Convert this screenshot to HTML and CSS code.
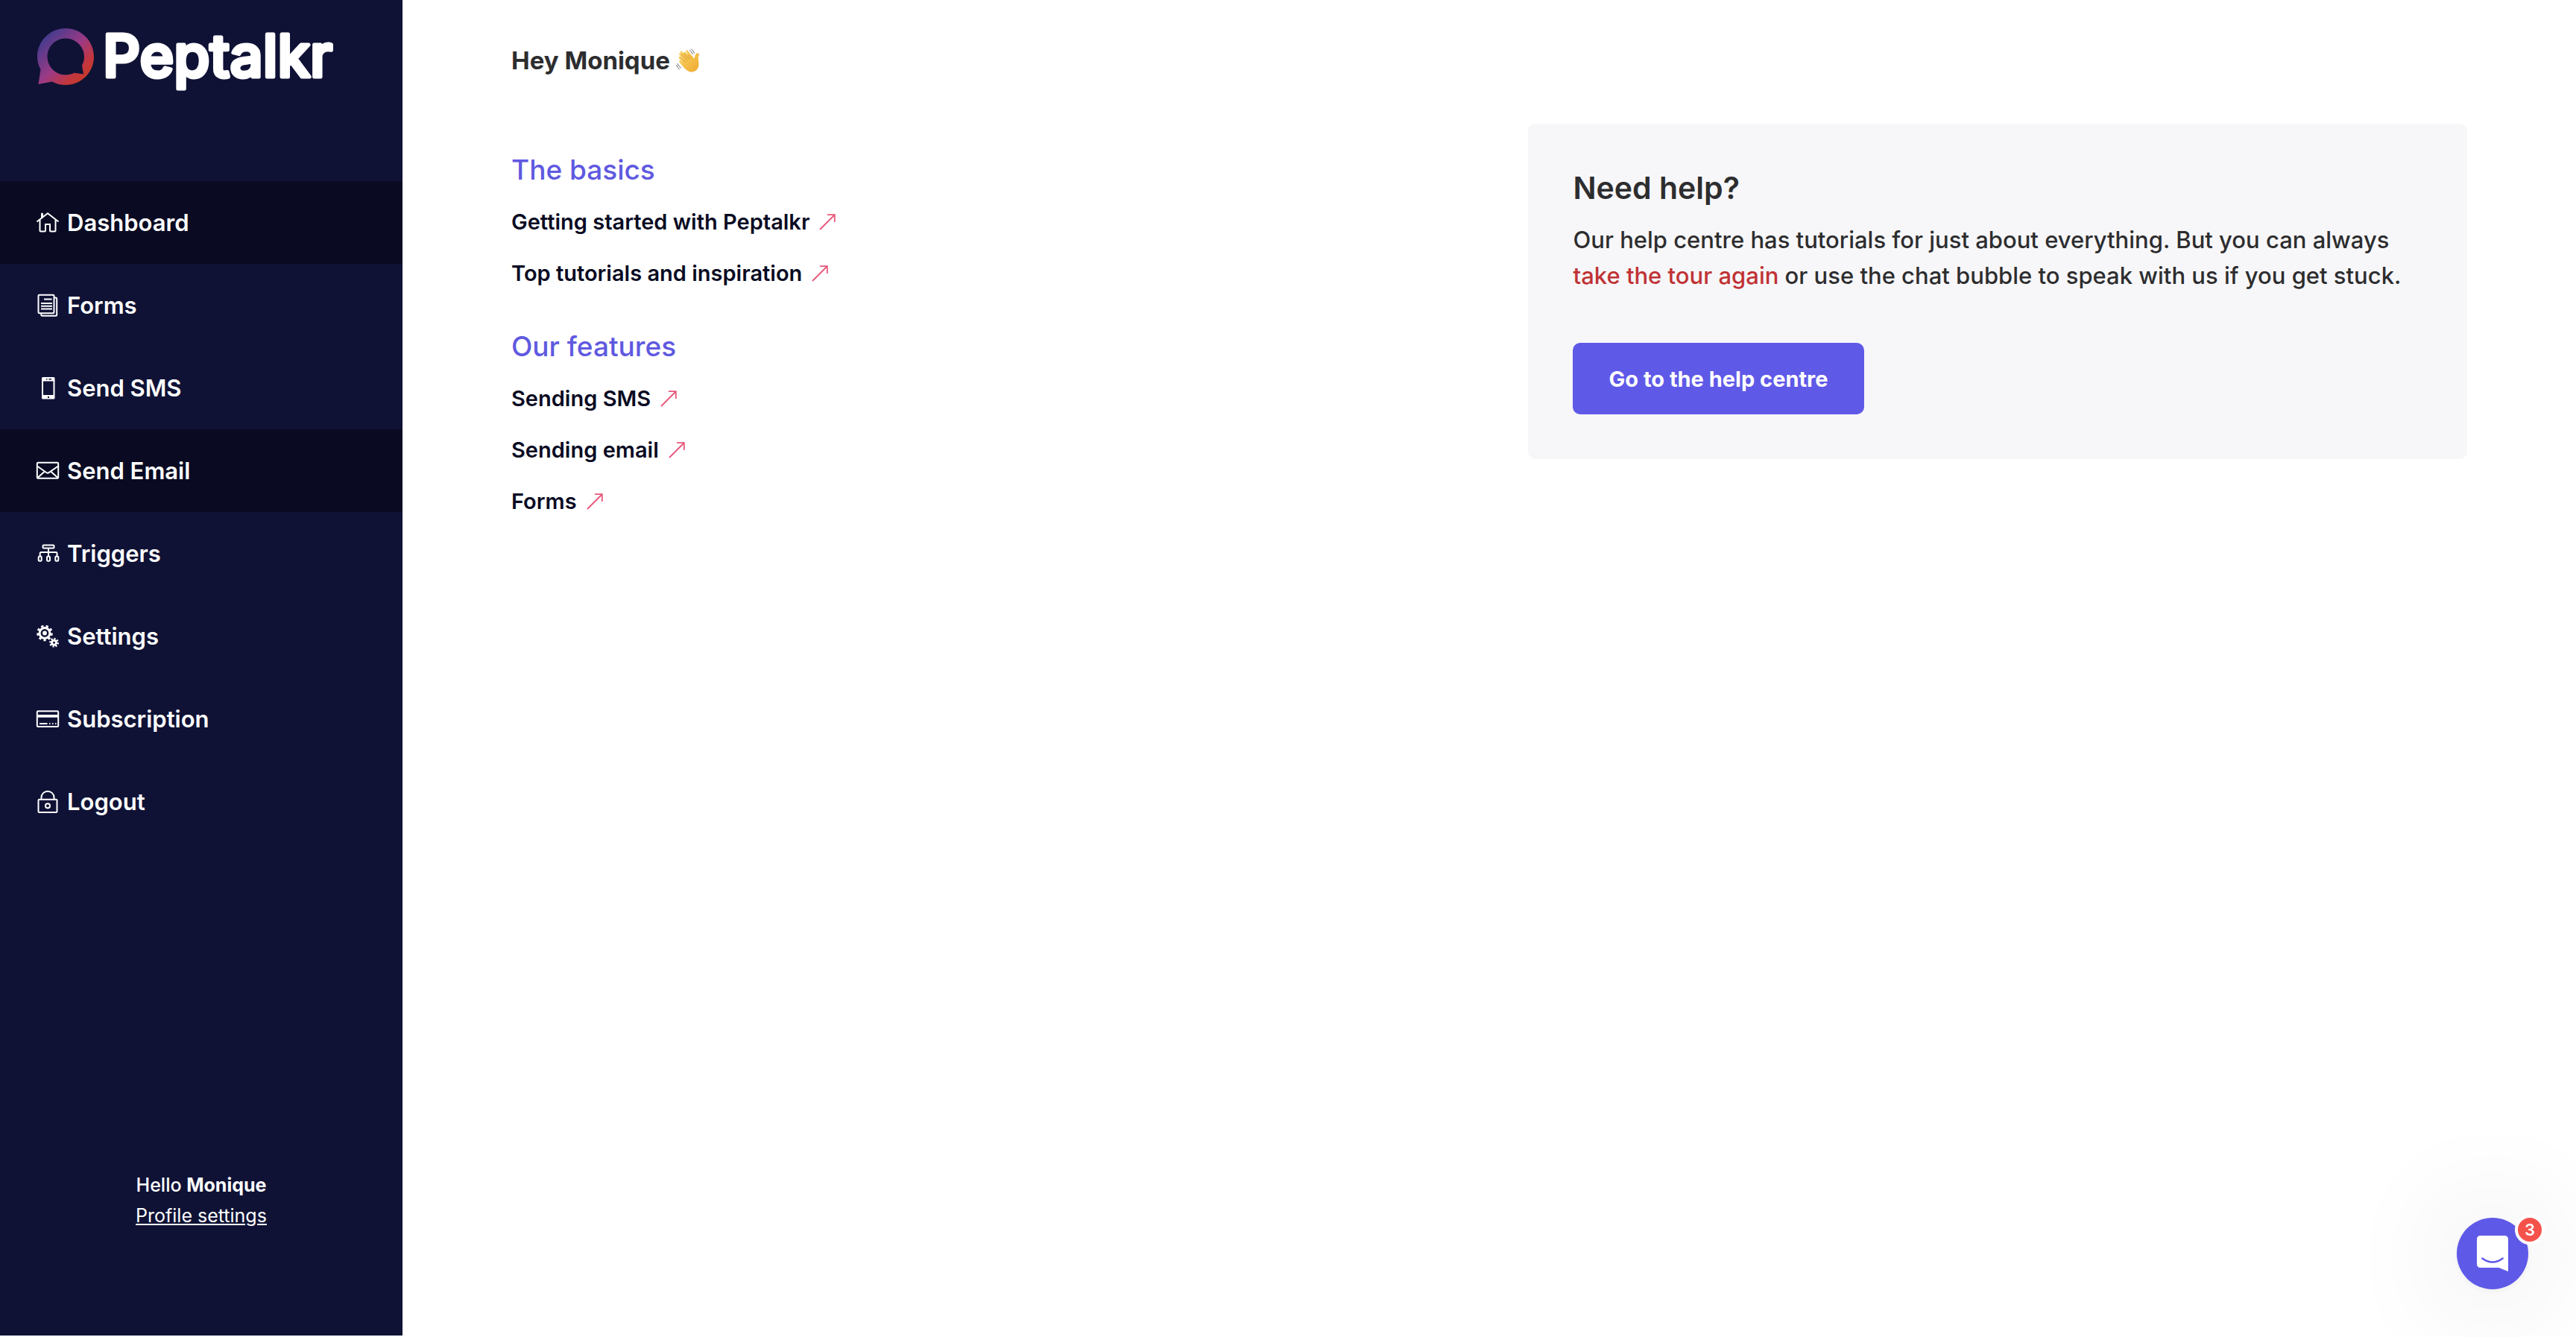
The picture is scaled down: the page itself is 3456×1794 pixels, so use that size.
FILE: index.html
```html
<!DOCTYPE html>
<html lang="en">
<head>
    <meta charset="UTF-8">
    <meta name="viewport" content="width=device-width, initial-scale=1.0">
    <title>Peptalkr - Dashboard</title>
    <link rel="stylesheet" href="styles.css">
</head>
<body>
    <svg width="0" height="0" class="sprite" aria-hidden="true">
        <symbol id="arrow" viewBox="0 0 22 22">
            <path d="M1 21L20.500 1.500M11 1.200H20.800V11" fill="none" stroke="#e8567a" stroke-width="1.800"/>
        </symbol>
    </svg>

    <aside class="sidebar">
        <a href="#" class="logo" aria-label="Peptalkr">
            <svg class="logo-mark" viewBox="0 0 76 76">
                <defs>
                    <linearGradient id="mark" x1="0.15" y1="0.15" x2="0.85" y2="0.85">
                        <stop offset="0" stop-color="#473b8d"/>
                        <stop offset="0.5" stop-color="#9a3a86"/>
                        <stop offset="0.85" stop-color="#c4363c"/>
                        <stop offset="1" stop-color="#c63a2c"/>
                    </linearGradient>
                </defs>
                <path fill="url(#mark)" fill-rule="evenodd" d="M38 0C59 0 76 17 76 38S59 76 38 76C31.500 76 25.500 74.500 20 71.500L1.500 75L4.500 55C1.500 50 0 44 0 38C0 17 17 0 38 0ZM38 13.500C24.500 13.500 13.500 24.500 13.500 38S24.500 62.500 38 62.500C42 62.500 46 61.500 49.500 59.700L62 61.500L60 49.500C62 46 63 42 63 38C63 24.500 51.500 13.500 38 13.500Z"/>
            </svg>
            <svg class="logo-text" viewBox="0 0 320 92">
                <text x="0" y="65">Peptalkr</text>
            </svg>
        </a>

        <nav class="menu">
            <a href="#" class="menu-item active">
                <svg class="icon" viewBox="0 0 30 30"><path d="M.5 13.500L15 2.300L29.500 13.500M4.500 11V25.500q0 1 1 1H11q1 0 1-1V17H18V25.500q0 1 1 1H24.500q1 0 1-1V11"/><path class="solid" d="M6 9V3q0-1.500 1.500-1.500T9 3V6.500Z"/></svg>
                Dashboard
            </a>
            <a href="#" class="menu-item">
                <svg class="icon" viewBox="0 0 30 30"><rect x="2.500" y=".7" width="21" height="24.500" rx="1.200"/><path d="M23.500 4.500H26q1.200 0 1.200 1.200V27.500q0 1.200-1.200 1.200H7.500q-1.200 0-1.200-1.200V25.500M10 6.500H20.500M6 12H21M6 15.800H21M6 19.500H21"/></svg>
                Forms
            </a>
            <a href="#" class="menu-item">
                <svg class="icon" viewBox="0 0 30 30"><path class="solid" fill-rule="evenodd" d="M8.500 0H23q1.500 0 1.500 1.500V28q0 1.500-1.500 1.500H8.500Q7 29.500 7 28V1.500Q7 0 8.500 0ZM9 5.500V24H22.500V5.500ZM13 2V3.500H14.500V2ZM16.500 2V3.500H20V2ZM15 26V28H17V26Z"/></svg>
                Send SMS
            </a>
            <a href="#" class="menu-item active">
                <svg class="icon" viewBox="0 0 30 30"><rect x=".8" y="3.800" width="28.400" height="21" rx="1.200"/><path d="M1 8.500L13.500 17.200q1.500 1 3 0L29 8.500M1.500 24L11 15.500M28.500 24L19 15.500"/></svg>
                Send Email
            </a>
            <a href="#" class="menu-item">
                <svg class="icon" viewBox="0 0 30 30"><rect x="8.500" y="3.500" width="15" height="4" rx="1"/><path d="M16 7.500V18.500M4.700 18.500V14.500q0-1.500 1.500-1.500H26q1.500 0 1.500 1.500V18.500"/><rect x="2.700" y="18.500" width="4" height="6.200" rx="1.500"/><rect x="14" y="18.500" width="4" height="6.200" rx="1.500"/><rect x="25.300" y="18.500" width="4" height="6.200" rx="1.500"/></svg>
                Triggers
            </a>
            <a href="#" class="menu-item">
                <svg class="icon" viewBox="0 0 30 30">
                    <circle class="gear" cx="11" cy="10.500" r="6.900"/>
                    <circle class="gear" cx="11" cy="10.500" r="9.300" pathLength="18" stroke-dasharray="1 1"/>
                    <circle class="solid" cx="11" cy="10.500" r="2.900"/>
                    <circle class="gear" cx="23.500" cy="23.300" r="3"/>
                    <circle class="gear" cx="23.500" cy="23.300" r="5" pathLength="16" stroke-dasharray="1 1"/>
                </svg>
                Settings
            </a>
            <a href="#" class="menu-item">
                <svg class="icon" viewBox="0 0 30 30"><rect x=".8" y="4.200" width="28.400" height="20.800" rx="1.200"/><path class="solid" d="M1 9H29V12.700H1Z"/><path d="M4 21H14.500M17 21H18.500M21 21H22.500M25 21H26.500"/></svg>
                Subscription
            </a>
            <a href="#" class="menu-item">
                <svg class="icon" viewBox="0 0 30 30"><rect x="2.500" y="11.800" width="25" height="17.200" rx="1.200"/><path d="M6.500 11.500V9a8.500 8.300 0 0 1 17 0V11.500"/><circle cx="15" cy="20.300" r="3"/></svg>
                Logout
            </a>
        </nav>

        <div class="profile">
            <div class="hello">Hello <strong>Monique</strong></div>
            <a href="#">Profile settings</a>
        </div>
    </aside>

    <main class="content">
        <h1>Hey Monique
            <svg class="wave" viewBox="0 0 32 32" role="img" aria-label="waving hand">
                <defs>
                    <linearGradient id="skin" x1="0" y1="0" x2="1" y2="1">
                        <stop offset="0" stop-color="#fbd569"/>
                        <stop offset="1" stop-color="#eea92f"/>
                    </linearGradient>
                </defs>
                <path fill="url(#skin)" d="M12 17L4.200 8.500C3.200 7.200 5 5.600 6.300 6.800L7.200 7.700L5.800 5.800C4.800 4.300 6.800 2.800 8 4L10.500 6.800C9.700 5.300 11.600 3.900 12.800 5.200L16 8.700C15.300 7 13.500 5 13.200 3.800C13 2 15.200 1.800 16 3.200L24.500 13.500C25.300 11.500 25.200 9.300 26.800 7.300C28.300 5.500 31 6.500 31 8.200C31 9.500 29.800 10.700 29.800 12.500C29.800 16.500 31.200 20.500 30 24.500C28.500 30 22.500 33 17.500 31C12.500 29 8 22.500 4.500 18.500C3.300 17 5 15.300 6.500 16.500L10 19.500L3.800 13.200C2.600 11.800 4.400 10.200 5.800 11.400Z"/>
                <path fill="none" stroke="#d08a20" stroke-width=".9" stroke-linecap="round" d="M7.200 7.700L15 16M10.500 6.800L17.300 14.200M16 8.700L20 13M5.800 11.400L12.500 18"/>
                <path fill="none" stroke="#555" stroke-width=".9" stroke-linecap="round" d="M18.500 2.500Q21 4.500 22.300 7.500M20.500.8Q23.300 3 24.500 6.300M2 20.500Q3 24 6.500 26M.5 22.500Q1.500 26 4.500 27.800"/>
            </svg>
        </h1>

        <div class="columns">
            <div class="links">
                <section>
                    <h2>The basics</h2>
                    <ul>
                        <li><a href="#">Getting started with Peptalkr <svg class="arrow"><use href="#arrow"/></svg></a></li>
                        <li><a href="#">Top tutorials and inspiration <svg class="arrow"><use href="#arrow"/></svg></a></li>
                    </ul>
                </section>
                <section>
                    <h2>Our features</h2>
                    <ul>
                        <li><a href="#">Sending SMS <svg class="arrow"><use href="#arrow"/></svg></a></li>
                        <li><a href="#">Sending email <svg class="arrow"><use href="#arrow"/></svg></a></li>
                        <li><a href="#">Forms <svg class="arrow"><use href="#arrow"/></svg></a></li>
                    </ul>
                </section>
            </div>

            <section class="help">
                <h3>Need help?</h3>
                <p>Our help centre has tutorials for just about everything. But you can always <a href="#">take the tour again</a> or use the chat bubble to speak with us if you get stuck.</p>
                <button type="button">Go to the help centre</button>
            </section>
        </div>
    </main>

    <button type="button" class="chat" aria-label="Open chat, 3 unread">
        <svg class="chat-icon" viewBox="0 0 42 48">
            <path fill="#fff" d="M5 0H37Q42 0 42 5V48L29.500 43H5Q0 43 0 38V5Q0 0 5 0Z"/>
            <path fill="none" stroke="#5f59e8" stroke-width="2.400" stroke-linecap="round" d="M7.300 30.500Q21 40.500 34.700 30.500"/>
        </svg>
        <span class="badge">3</span>
    </button>
</body>
</html>
```
FILE: styles.css
```css
* { box-sizing: border-box; }
body { margin: 0; display: flex; align-items: flex-start; min-height: 100vh; background: #fff; color: #2d2d2f; font-family: Inter, sans-serif; font-size: 29px; }
a { color: inherit; text-decoration: none; }
h1, h2, h3, p, ul { margin: 0; padding: 0; }
ul { list-style: none; }
button { border: none; font-family: inherit; cursor: pointer; }
.sprite { position: absolute; }

/* sidebar */
.sidebar { display: flex; flex-direction: column; flex: none; width: 540px; min-height: calc(100vh - 2px); background: #0f1235; color: #fff; }
.logo { display: flex; align-items: flex-start; height: 243px; padding: 38px 50px; }
.logo-mark { flex: none; width: 76px; height: 76px; margin-right: 12px; }
.logo-text { flex: none; width: 320px; height: 92px; overflow: visible; }
.logo-text text { font-size: 78px; font-weight: 500; fill: #fff; stroke: #fff; stroke-width: 5px; stroke-linejoin: round; }
.menu-item { display: flex; align-items: center; gap: 11px; height: 111px; padding: 0 49px; font-size: 31px; font-weight: 600; }
.menu-item.active { background: #0a0b23; }
.icon { flex: none; width: 30px; height: 30px; fill: none; stroke: #fff; stroke-width: 2px; overflow: visible; }
.icon .solid { fill: #fff; stroke: none; }
.icon .gear { stroke-width: 3px; }
.profile { margin-top: auto; padding-bottom: 140px; text-align: center; font-size: 25px; line-height: 41px; }
.profile .hello { font-weight: 500; }
.profile strong { font-weight: 700; }
.profile a { text-decoration: underline; }

/* main area */
.content { flex: 1; padding: 56px 146px 0; }
h1 { display: flex; align-items: center; gap: 8px; font-size: 33px; line-height: 50px; font-weight: 700; }
.wave { width: 32px; height: 32px; }
.columns { display: grid; grid-template-columns: 52fr 48fr; align-items: start; margin-top: 60px; }
.links { padding-top: 32px; }
.links section { margin-bottom: 34px; }
.links h2 { margin-bottom: 5px; color: #5f59e0; font-size: 37px; line-height: 60px; font-weight: 500; }
.links li { height: 69px; line-height: 69px; color: #0a0b23; font-size: 29px; font-weight: 600; }
.links a { display: inline-flex; align-items: center; gap: 13px; }
.arrow { width: 22px; height: 22px; }

.help { padding: 60px; border-radius: 10px; background: #f7f7f9; }
.help h3 { font-size: 41px; line-height: 52px; font-weight: 600; }
.help p { margin: 20px 0 66px; font-size: 31px; line-height: 48px; font-weight: 500; }
.help p a { color: #c03235; }
.help button { height: 96px; padding: 0 48px; border-radius: 10px; background: #5f59e8; color: #fff; font-size: 29px; font-weight: 700; }

/* chat bubble */
.chat { position: fixed; right: 64px; bottom: 64px; display: flex; align-items: center; justify-content: center; width: 96px; height: 96px; padding: 0; border-radius: 50%; background: #5f59e8; box-shadow: 0 2px 12px rgba(0, 0, 0, 0.05), 0 4px 160px rgba(0, 0, 0, 0.16); }
.chat-icon { width: 42px; height: 48px; }
.badge { position: absolute; top: -4px; right: -22px; width: 40px; height: 40px; border: 4px solid #fff; border-radius: 50%; background: #f5524b; color: #fff; font-size: 22px; line-height: 32px; font-weight: 600; text-align: center; }
```
